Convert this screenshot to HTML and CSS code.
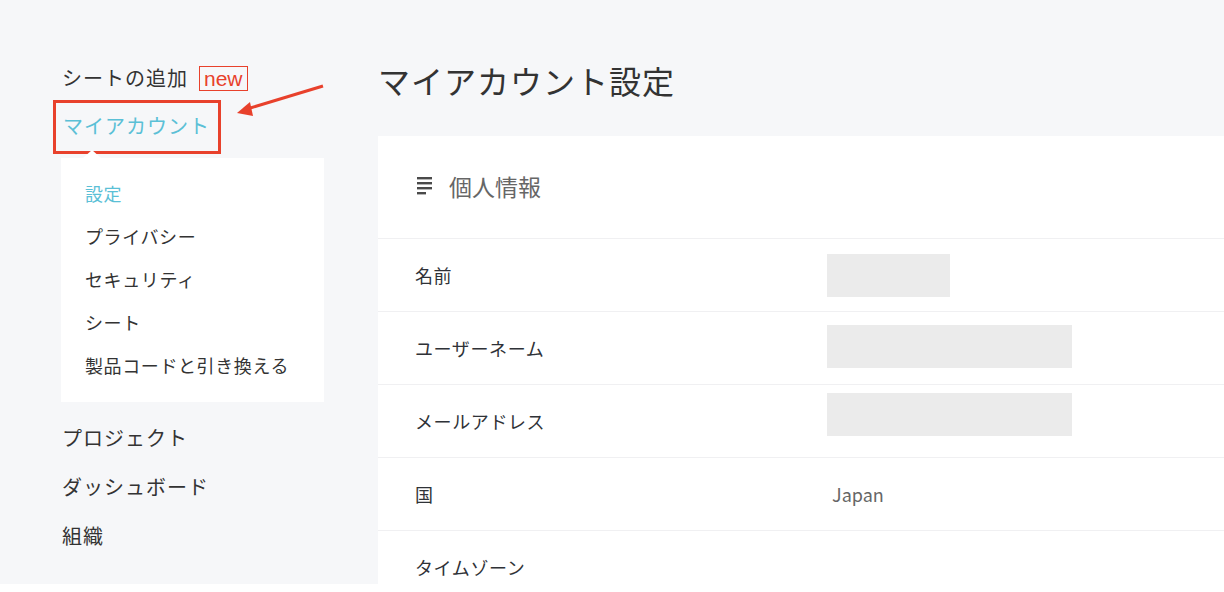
FILE: index.html
```html
<!DOCTYPE html>
<html>
<head>
  <title>マイアカウント設定</title>
  <link rel="stylesheet" href="styles.css">
</head>
<body>
  <div class="page">
    <div class="sidebar">
      <div class="nav-item">シートの追加<span class="badge-new">new</span></div>
      <div class="nav-current">マイアカウント</div>
      <div class="submenu">
        <div class="sub-item active">設定</div>
        <div class="sub-item">プライバシー</div>
        <div class="sub-item">セキュリティ</div>
        <div class="sub-item">シート</div>
        <div class="sub-item">製品コードと引き換える</div>
      </div>
      <div class="nav-list">
        <div class="nav-link">プロジェクト</div>
        <div class="nav-link">ダッシュボード</div>
        <div class="nav-link">組織</div>
      </div>
    </div>

    <div class="main">
      <h1 class="page-title">マイアカウント設定</h1>
      <div class="card">
        <div class="card-header">
          <svg class="list-icon" width="16" height="18" viewBox="0 0 16 18">
            <rect x="0" y="0" width="15" height="2.4" fill="#4a4a4a"/>
            <rect x="0" y="5" width="15" height="2.4" fill="#4a4a4a"/>
            <rect x="0" y="10" width="15" height="2.4" fill="#4a4a4a"/>
            <rect x="0" y="15" width="9" height="2.4" fill="#4a4a4a"/>
          </svg>
          <span>個人情報</span>
        </div>
        <div class="row">
          <div class="label">名前</div>
          <div class="value"><div class="blank short"></div></div>
        </div>
        <div class="row">
          <div class="label">ユーザーネーム</div>
          <div class="value"><div class="blank long up-small"></div></div>
        </div>
        <div class="row">
          <div class="label">メールアドレス</div>
          <div class="value"><div class="blank long up"></div></div>
        </div>
        <div class="row">
          <div class="label">国</div>
          <div class="value text">Japan</div>
        </div>
        <div class="row">
          <div class="label">タイムゾーン</div>
          <div class="value"></div>
        </div>
      </div>
    </div>

    <!-- 注釈の矢印 -->
    <svg class="arrow" width="100" height="40" viewBox="230 80 100 40">
      <line x1="323" y1="86" x2="247" y2="109" stroke="#e8412c" stroke-width="3"/>
      <polygon points="237,113 250,102 253,116" fill="#e8412c"/>
    </svg>
  </div>
</body>
</html>
```

FILE: styles.css
```css
body {
  margin: 0;
  background-color: white;
  font-family: "Noto Sans CJK JP", "Noto Sans", sans-serif;
  color: #333;
}

.page {
  position: relative;
  display: flex;
  height: 584px;
  background-color: #f6f7f9;
}

.sidebar {
  width: 316px;
  padding: 63px 0 0 62px;
  flex-shrink: 0;
}

.nav-item {
  font-size: 20px;
  line-height: 30px;
  letter-spacing: 1px;
  display: flex;
  align-items: center;
}

.badge-new {
  margin-left: 11px;
  padding: 0 4px;
  border: 1px solid #e8412c;
  color: #e8412c;
  font-family: "Liberation Sans", Arial, sans-serif;
  font-size: 21px;
  line-height: 23px;
  letter-spacing: 0;
}

.nav-current {
  display: inline-block;
  margin: 7px 0 0 -9px;
  padding: 9px 8px 11px 7px;
  border: 3px solid #e8412c;
  color: #5bc0d6;
  font-size: 20px;
  line-height: 28px;
  letter-spacing: 1px;
}

.submenu {
  position: relative;
  width: 239px;
  margin: 4px 0 0 -1px;
  padding: 14px 0 15px 24px;
  background-color: white;
}

.submenu::before {
  content: "";
  position: absolute;
  left: 22px;
  top: -8px;
  border-left: 9px solid transparent;
  border-right: 9px solid transparent;
  border-bottom: 8px solid white;
}

.sub-item {
  font-size: 18px;
  line-height: 43px;
  letter-spacing: 0.6px;
}

.sub-item.active {
  color: #5bc0d6;
}

.nav-list {
  margin-top: 11px;
}

.nav-link {
  font-size: 20px;
  line-height: 49px;
  letter-spacing: 1px;
}

.main {
  flex: 1;
  display: flex;
  flex-direction: column;
}

.page-title {
  margin: 56px 0 32px 0;
  font-size: 32px;
  line-height: 48px;
  font-weight: normal;
  letter-spacing: 1px;
}

.card {
  background-color: white;
  flex: 1;
}

.card-header {
  height: 100px;
  padding-bottom: 2px;
  border-bottom: 1px solid #f0f0f2;
  display: flex;
  align-items: center;
  padding-left: 39px;
  font-size: 23px;
  color: #666;
}

.list-icon {
  margin: 0 16px 0 0;
}

.row {
  height: 72px;
  border-bottom: 1px solid #f0f0f2;
  display: flex;
  align-items: center;
}

.label {
  width: 412px;
  padding-left: 37px;
  font-size: 18px;
  letter-spacing: 0.6px;
  color: #2f3237;
}

.value {
  display: flex;
  align-items: center;
}

.value.text {
  padding-left: 5px;
  font-size: 18px;
  color: #666;
}

.blank {
  height: 43px;
  background-color: #ebebeb;
}

.blank.short {
  width: 123px;
}

.blank.long {
  width: 245px;
}

.blank.up-small {
  margin-top: -4px;
}

.blank.up {
  margin-top: -14px;
}

.arrow {
  position: absolute;
  left: 230px;
  top: 80px;
}
```
